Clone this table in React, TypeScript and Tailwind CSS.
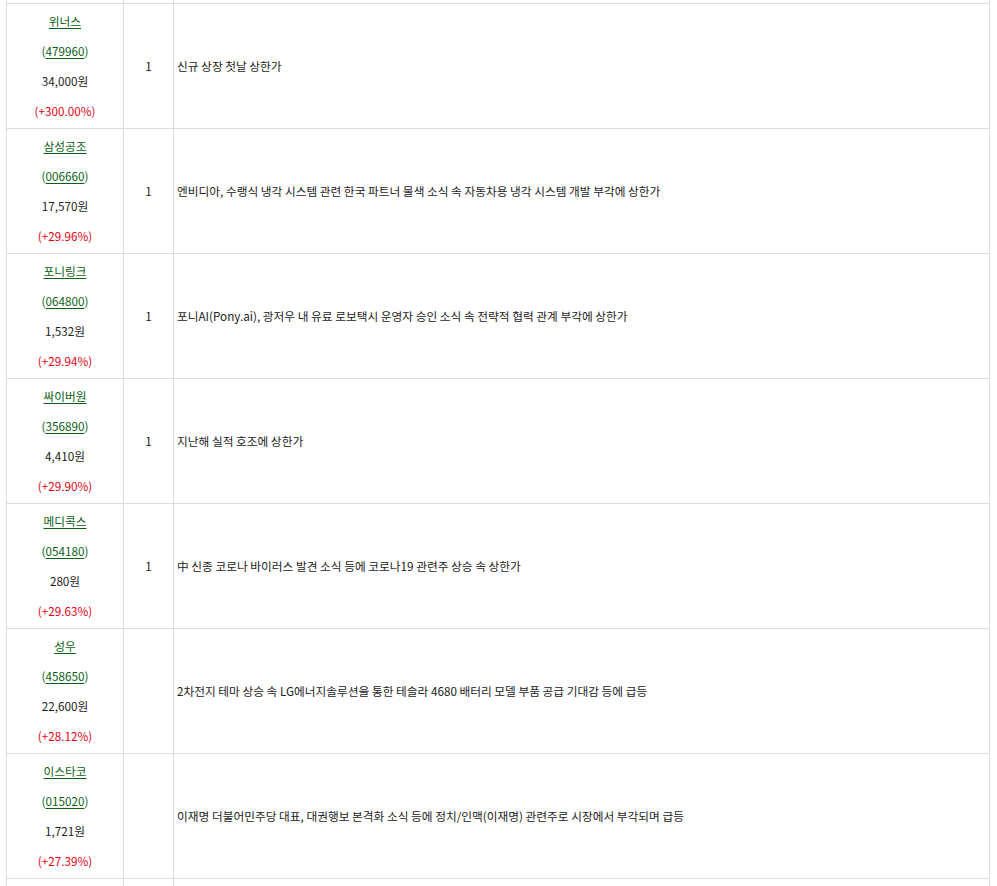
import React from "react";

type Row = {
  name: string;
  code: string;
  price: string;
  change: string;
  count: string;
  reason: string;
};

const rows: Row[] = [
  { name: "위너스", code: "479960", price: "34,000원", change: "(+300.00%)", count: "1", reason: "신규 상장 첫날 상한가" },
  { name: "삼성공조", code: "006660", price: "17,570원", change: "(+29.96%)", count: "1", reason: "엔비디아, 수랭식 냉각 시스템 관련 한국 파트너 물색 소식 속 자동차용 냉각 시스템 개발 부각에 상한가" },
  { name: "포니링크", code: "064800", price: "1,532원", change: "(+29.94%)", count: "1", reason: "포니AI(Pony.ai), 광저우 내 유료 로보택시 운영자 승인 소식 속 전략적 협력 관계 부각에 상한가" },
  { name: "싸이버원", code: "356890", price: "4,410원", change: "(+29.90%)", count: "1", reason: "지난해 실적 호조에 상한가" },
  { name: "메디콕스", code: "054180", price: "280원", change: "(+29.63%)", count: "1", reason: "中 신종 코로나 바이러스 발견 소식 등에 코로나19 관련주 상승 속 상한가" },
  { name: "성우", code: "458650", price: "22,600원", change: "(+28.12%)", count: "", reason: "2차전지 테마 상승 속 LG에너지솔루션을 통한 테슬라 4680 배터리 모델 부품 공급 기대감 등에 급등" },
  { name: "이스타코", code: "015020", price: "1,721원", change: "(+27.39%)", count: "", reason: "이재명 더불어민주당 대표, 대권행보 본격화 소식 등에 정치/인맥(이재명) 관련주로 시장에서 부각되며 급등" },
];

export default function App() {
  return (
    <div className="h-[886px] overflow-hidden bg-white pl-[6px] pr-[7px] font-['Noto_Sans_CJK_KR','Noto_Sans',sans-serif] text-[11.7px] text-[#222]">
      <div className="border-l border-r border-[#dcdcdc]">
        {/* tail of the previous row */}
        <div className="grid h-[3px] grid-cols-[117px_50px_1fr]">
          <div className="border-r border-[#dcdcdc]" />
          <div className="border-r border-[#dcdcdc]" />
          <div />
        </div>
        {rows.map((r) => (
          <div
            key={r.code}
            className="grid h-[125px] grid-cols-[117px_50px_1fr] border-t border-[#dcdcdc]"
          >
            <div className="flex flex-col items-center justify-center border-r border-[#dcdcdc] leading-[30px]">
              <a className="text-[#0b6016] underline underline-offset-2">{r.name}</a>
              <span className="text-[#0b6016]">
                (<a className="underline underline-offset-2">{r.code}</a>)
              </span>
              <span>{r.price}</span>
              <span className="text-[#e60012]">{r.change}</span>
            </div>
            <div className="flex items-center justify-center border-r border-[#dcdcdc]">
              {r.count}
            </div>
            <div className="flex items-center pl-[3px]">{r.reason}</div>
          </div>
        ))}
        <div className="grid h-[20px] grid-cols-[117px_50px_1fr] border-t border-[#dcdcdc]">
          <div className="border-r border-[#dcdcdc]" />
          <div className="border-r border-[#dcdcdc]" />
          <div />
        </div>
      </div>
    </div>
  );
}
